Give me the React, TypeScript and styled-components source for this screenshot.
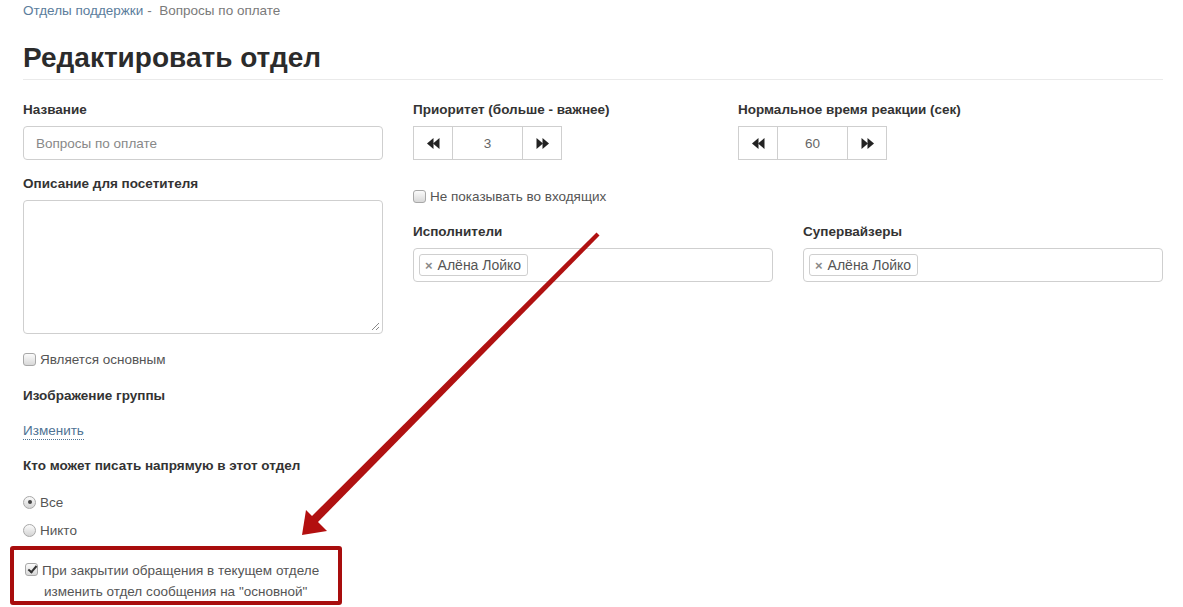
import React from "react";
import styled, { createGlobalStyle } from "styled-components";

const GlobalStyle = createGlobalStyle`
  html, body { margin: 0; padding: 0; background: #fff; }
  body {
    font-family: "Liberation Sans", Arial, sans-serif;
    font-size: 14px;
    color: #333;
  }
  * { box-sizing: border-box; }
`;

const Page = styled.div`
  position: relative;
  width: 1183px;
  height: 607px;
  overflow: hidden;
  padding: 0 20px 0 23px;
`;

const Breadcrumb = styled.div`
  display: flex;
  gap: 4px;
  height: 22px;
  line-height: 22px;
  font-size: 13.5px;
`;

const Crumb = styled.a`
  color: #5b7d9c;
  text-decoration: none;
`;

const Current = styled.span`
  color: #7a7a7a;
`;

const Title = styled.h1`
  margin: 0;
  padding: 18px 0 3px;
  font-size: 28px;
  line-height: 36px;
  font-weight: bold;
  color: #2b2b2b;
  border-bottom: 1px solid #eaeaea;
  width: 1140px;
`;

const Form = styled.div`
  display: grid;
  grid-template-columns: 360px 750px;
  column-gap: 30px;
  padding-top: 20px;
`;

const Column = styled.div`
  display: flex;
  flex-direction: column;
`;

const Label = styled.div<{ $mt?: number }>`
  font-weight: bold;
  font-size: 13.5px;
  line-height: 20px;
  color: #333;
  margin-top: ${(p) => p.$mt ?? 0}px;
  margin-bottom: 6px;
`;

const TextInput = styled.div`
  height: 34px;
  border: 1px solid #cfcfcf;
  border-radius: 4px;
  padding: 0 12px;
  display: flex;
  align-items: center;
  font-size: 13.5px;
  color: #888;
`;

const TextArea = styled.div`
  position: relative;
  height: 134px;
  border: 1px solid #cfcfcf;
  border-radius: 4px;
`;

const Grip = styled.svg`
  position: absolute;
  right: 2px;
  bottom: 2px;
`;

const Check = styled.span<{ $checked?: boolean }>`
  display: inline-block;
  position: relative;
  width: 13px;
  height: 13px;
  border: 1px solid #a8a8a8;
  border-radius: 3px;
  background: linear-gradient(#fbfbfb, #d8d8d8);
  flex: none;
  ${(p) =>
    p.$checked
      ? `&::after {
          content: "";
          position: absolute;
          left: 3.5px;
          top: 0px;
          width: 3px;
          height: 7px;
          border: solid #333;
          border-width: 0 2px 2px 0;
          transform: rotate(40deg);
        }`
      : ""}
`;

const Radio = styled.span<{ $checked?: boolean }>`
  display: inline-block;
  position: relative;
  width: 13px;
  height: 13px;
  border: 1px solid #a8a8a8;
  border-radius: 50%;
  background: linear-gradient(#fbfbfb, #d4d4d4);
  flex: none;
  ${(p) =>
    p.$checked
      ? `&::after {
          content: "";
          position: absolute;
          left: 3.5px;
          top: 3.5px;
          width: 4px;
          height: 4px;
          border-radius: 50%;
          background: #444;
        }`
      : ""}
`;

const OptionRow = styled.div<{ $mt?: number }>`
  display: flex;
  align-items: center;
  gap: 4px;
  height: 20px;
  margin-top: ${(p) => p.$mt ?? 0}px;
  font-size: 13.5px;
  color: #555;
`;

const Link = styled.a`
  align-self: flex-start;
  margin-top: 9px;
  line-height: 20px;
  font-size: 13.5px;
  color: #4f7394;
  text-decoration: none;
  border-bottom: 1px dotted #4f7394;
  height: 19px;
`;

const Highlight = styled.div`
  margin: 6px 0 0 -13px;
  width: 332px;
  height: 59px;
  border: 4px solid #a80d0d;
  border-radius: 3px;
  padding: 10px 0 0 11px;
  display: flex;
  gap: 4px;
  align-items: flex-start;
  font-size: 13.5px;
  line-height: 21px;
  color: #555;
`;

const HighlightCheck = styled(Check)`
  margin-top: 3px;
`;

const HighlightText = styled.span`
  display: flex;
  flex-direction: column;
`;

const TextLine = styled.span<{ $indent?: number }>`
  padding-left: ${(p) => p.$indent ?? 0}px;
  white-space: nowrap;
`;

const StepperRow = styled.div`
  display: grid;
  grid-template-columns: 325px 425px;
`;

const Stepper = styled.div`
  display: flex;
  width: 149px;
  height: 34px;
  border: 1px solid #cfcfcf;
`;

const StepBtn = styled.div`
  width: 38px;
  display: flex;
  align-items: center;
  justify-content: center;
`;

const StepValue = styled.div`
  width: 71px;
  border-left: 1px solid #cfcfcf;
  border-right: 1px solid #cfcfcf;
  display: flex;
  align-items: center;
  justify-content: center;
  font-size: 13.5px;
  color: #666;
`;

const PeopleRow = styled.div`
  display: grid;
  grid-template-columns: 360px 360px;
  column-gap: 30px;
  margin-top: 16px;
`;

const TagInput = styled.div`
  height: 34px;
  border: 1px solid #cfcfcf;
  border-radius: 4px;
  padding: 5px;
  display: flex;
  align-items: center;
`;

const Tag = styled.span`
  display: inline-flex;
  align-items: center;
  gap: 5px;
  height: 22px;
  padding: 0 6px 0 5px;
  border: 1px solid #cfcfcf;
  border-radius: 3px;
  font-size: 14px;
  color: #555;
`;

const TagX = styled.span`
  font-size: 13px;
  font-weight: bold;
  color: #8a8a8a;
`;

const ArrowOverlay = styled.svg`
  position: absolute;
  left: 0;
  top: 0;
  pointer-events: none;
`;

const Back = () => (
  <svg width="13" height="11" viewBox="0 0 13 11">
    <polygon points="0,5.5 6.5,0 6.5,11" fill="#222" />
    <polygon points="6,5.5 12.5,0 12.5,11" fill="#222" />
  </svg>
);
const Fwd = () => (
  <svg width="13" height="11" viewBox="0 0 13 11">
    <polygon points="0.5,0 7,5.5 0.5,11" fill="#222" />
    <polygon points="6.5,0 13,5.5 6.5,11" fill="#222" />
  </svg>
);

const NumberStepper = ({ value }: { value: string }) => (
  <Stepper>
    <StepBtn>
      <Back />
    </StepBtn>
    <StepValue>{value}</StepValue>
    <StepBtn>
      <Fwd />
    </StepBtn>
  </Stepper>
);

const PersonTag = () => (
  <Tag>
    <TagX>×</TagX>
    Алёна Лойко
  </Tag>
);

export default function App() {
  return (
    <Page>
      <GlobalStyle />
      <Breadcrumb>
        <Crumb href="#">Отделы поддержки</Crumb>
        <Current>-&nbsp; Вопросы по оплате</Current>
      </Breadcrumb>
      <Title>Редактировать отдел</Title>
      <Form>
        <Column>
          <Label>Название</Label>
          <TextInput>Вопросы по оплате</TextInput>
          <Label $mt={14}>Описание для посетителя</Label>
          <TextArea>
            <Grip width="9" height="9" viewBox="0 0 9 9">
              <line x1="8" y1="1" x2="1" y2="8" stroke="#888" strokeWidth="1" />
              <line x1="8" y1="5" x2="5" y2="8" stroke="#888" strokeWidth="1" />
            </Grip>
          </TextArea>
          <OptionRow $mt={15}>
            <Check />
            Является основным
          </OptionRow>
          <Label $mt={17}>Изображение группы</Label>
          <Link href="#">Изменить</Link>
          <Label $mt={16}>Кто может писать напрямую в этот отдел</Label>
          <OptionRow $mt={10}>
            <Radio $checked />
            Все
          </OptionRow>
          <OptionRow $mt={8}>
            <Radio />
            Никто
          </OptionRow>
          <Highlight>
            <HighlightCheck $checked />
            <HighlightText>
              <TextLine>При закрытии обращения в текущем отделе</TextLine>
              <TextLine $indent={2}>изменить отдел сообщения на "основной"</TextLine>
            </HighlightText>
          </Highlight>
        </Column>
        <Column>
          <StepperRow>
            <Column>
              <Label>Приоритет (больше - важнее)</Label>
              <NumberStepper value="3" />
            </Column>
            <Column>
              <Label>Нормальное время реакции (сек)</Label>
              <NumberStepper value="60" />
            </Column>
          </StepperRow>
          <OptionRow $mt={26}>
            <Check />
            Не показывать во входящих
          </OptionRow>
          <PeopleRow>
            <Column>
              <Label>Исполнители</Label>
              <TagInput>
                <PersonTag />
              </TagInput>
            </Column>
            <Column>
              <Label>Супервайзеры</Label>
              <TagInput>
                <PersonTag />
              </TagInput>
            </Column>
          </PeopleRow>
        </Column>
      </Form>
      <ArrowOverlay width="1183" height="607" viewBox="0 0 1183 607">
        <polygon points="596.5,232.5 599.5,235.5 317,523 311,517" fill="#b01111" />
        <polygon points="302,535 306,510 327,531" fill="#b30f0f" />
      </ArrowOverlay>
    </Page>
  );
}
